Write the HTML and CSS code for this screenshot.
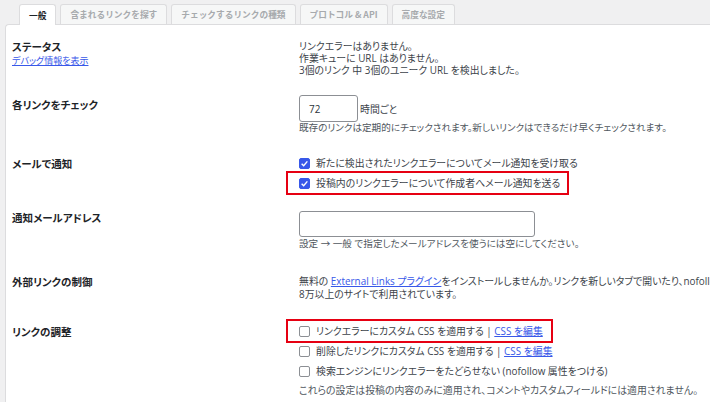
FILE: index.html
```html
<!DOCTYPE html>
<html lang="ja">
<head>
<meta charset="utf-8">
<link rel="stylesheet" href="styles.css">
</head>
<body>
<nav class="tabs">
  <a class="tab active">一般</a>
  <a class="tab">含まれるリンクを探す</a>
  <a class="tab">チェックするリンクの種類</a>
  <a class="tab">プロトコル &amp; API</a>
  <a class="tab">高度な設定</a>
</nav>
<main class="panel">
  <section class="row">
    <div class="th">
      <div class="label">ステータス</div>
      <a class="link debug">デバッグ情報を表示</a>
    </div>
    <div class="td">
      <div class="line">リンクエラーはありません。</div>
      <div class="line">作業キューに URL はありません。</div>
      <div class="line">3個のリンク 中 3個のユニーク URL を検出しました。</div>
    </div>
  </section>

  <section class="row">
    <div class="th"><div class="label label-input">各リンクをチェック</div></div>
    <div class="td">
      <div class="inline-field">
        <span class="input small">72</span><span class="unit">時間ごと</span>
      </div>
      <div class="line desc">既存のリンクは定期的にチェックされます。新しいリンクはできるだけ早くチェックされます。</div>
    </div>
  </section>

  <section class="row row-mail">
    <div class="th"><div class="label label-cb">メールで通知</div></div>
    <div class="td">
      <div class="cbline"><span class="cb checked"><svg viewBox="0 0 12 12" width="9" height="9"><path d="M2.2 6.3 L4.9 8.9 L9.8 3.2" fill="none" stroke="#fff" stroke-width="1.9"/></svg></span><span>新たに検出されたリンクエラーについてメール通知を受け取る</span></div>
      <div class="cbline mark mark-a"><span class="cb checked"><svg viewBox="0 0 12 12" width="9" height="9"><path d="M2.2 6.3 L4.9 8.9 L9.8 3.2" fill="none" stroke="#fff" stroke-width="1.9"/></svg></span><span>投稿内のリンクエラーについて作成者へメール通知を送る</span></div>
    </div>
  </section>

  <section class="row row-email">
    <div class="th"><div class="label">通知メールアドレス</div></div>
    <div class="td">
      <span class="input wide"></span>
      <div class="line desc">設定 → 一般 で指定したメールアドレスを使うには空にしてください。</div>
    </div>
  </section>

  <section class="row row-ext">
    <div class="th"><div class="label">外部リンクの制御</div></div>
    <div class="td">
      <div class="line tall">無料の <a class="link">External Links プラグイン</a>をインストールしませんか。リンクを新しいタブで開いたり、nofollow を設定したりできます。</div>
      <div class="line tall">8万以上のサイトで利用されています。</div>
    </div>
  </section>

  <section class="row row-adj">
    <div class="th"><div class="label label-cb">リンクの調整</div></div>
    <div class="td">
      <div class="cbline mark mark-b"><span class="cb"></span><span>リンクエラーにカスタム CSS を適用する <span class="sep">|</span> <a class="link">CSS を編集</a></span></div>
      <div class="cbline"><span class="cb"></span><span>削除したリンクにカスタム CSS を適用する <span class="sep">|</span> <a class="link">CSS を編集</a></span></div>
      <div class="cbline"><span class="cb"></span><span>検索エンジンにリンクエラーをたどらせない (nofollow 属性をつける)</span></div>
      <div class="line desc last">これらの設定は投稿の内容のみに適用され、コメントやカスタムフィールドには適用されません。</div>
    </div>
  </section>
</main>
</body>
</html>
```

FILE: styles.css
```css
html, body {
  margin: 0;
  padding: 0;
  overflow: hidden;
  background: #f0f0f1;
  width: 710px;
  height: 402px;
}

body {
  font-family: "Open Sans", "Noto Sans CJK JP", sans-serif;
  font-size: 9.9px;
  color: #3c434a;
  font-feature-settings: "palt";
}

.tabs {
  display: flex;
  gap: 4px;
  padding: 4px 0 0 19px;
  height: 20px;
  box-sizing: content-box;
}

.tab {
  display: flex;
  align-items: center;
  height: 19px;
  padding: 0 9px;
  border: 1px solid #dcdcde;
  border-bottom: 0;
  border-radius: 3px 3px 0 0;
  background: #f6f7f7;
  color: #a7aaad;
  font-family: "Noto Sans CJK JP", sans-serif;
  font-size: 8.7px;
  font-weight: 700;
  font-feature-settings: normal;
  position: relative;
}

.tab.active {
  background: #fff;
  color: #1d2327;
  z-index: 1;
  height: 20px;
  margin-bottom: -1px;
}

.panel {
  margin-left: 5px;
  background: #fff;
  border-top: 1px solid #dcdcde;
  border-left: 1px solid #dcdcde;
  border-top-left-radius: 4px;
  padding: 6px 0 0 6px;
  height: 400px;
  box-sizing: border-box;
}

.row {
  display: grid;
  grid-template-columns: 287px 1fr;
  padding: 9px 0 10px;
}

.th {
  display: flex;
  flex-direction: column;
}

.label {
  font-family: "Noto Sans CJK JP", sans-serif;
  font-weight: 700;
  color: #1d2327;
  font-size: 10.5px;
  line-height: 13px;
}

.label-input { margin-top: 3px; }
.label-cb { margin-top: 4px; }

.debug {
  font-size: 9px;
  line-height: 11px;
  margin-top: 2px;
}

.link {
  color: #3858e9;
  text-decoration: underline;
}

.td {
  display: flex;
  flex-direction: column;
  align-items: flex-start;
  min-width: 0;
}

.line {
  line-height: 12px;
  white-space: nowrap;
}

.line.tall { line-height: 13px; }

.desc {
  color: #50575e;
  font-size: 9.6px;
}

.inline-field {
  display: flex;
  align-items: center;
}

.input {
  display: flex;
  align-items: center;
  box-sizing: border-box;
  border: 1px solid #8c8f94;
  border-radius: 3px;
  background: #fff;
  color: #2c3338;
  height: 27px;
}

.input.small {
  width: 59px;
  padding-left: 9px;
}

.input.wide {
  width: 236px;
  height: 26px;
  margin-bottom: 1px;
}

.unit { margin-left: 2px; }

.cbline {
  display: flex;
  align-items: center;
  gap: 6px;
  height: 20px;
  white-space: nowrap;
}

.cb {
  width: 11px;
  height: 11px;
  box-sizing: border-box;
  border: 1px solid #8c8f94;
  border-radius: 2px;
  background: #fff;
  display: flex;
  align-items: center;
  justify-content: center;
  flex: none;
}

.cb.checked {
  background: #3858e9;
  border-color: #3858e9;
}

.sep { color: #3c434a; }

.mark {
  border: 2px solid #e60012;
  margin: -2px 0 -2px -13px;
  padding-left: 11px;
}

.mark-a { padding-right: 7px; }
.mark-b { padding-right: 8px; }

.row-mail { padding-top: 9px; }
.row-email { padding-top: 8px; }
.row-ext { padding-top: 15px; }
.row-adj { padding-top: 10px; }

.last {
  margin-top: 3px;
  font-size: 9.9px;
}
```
